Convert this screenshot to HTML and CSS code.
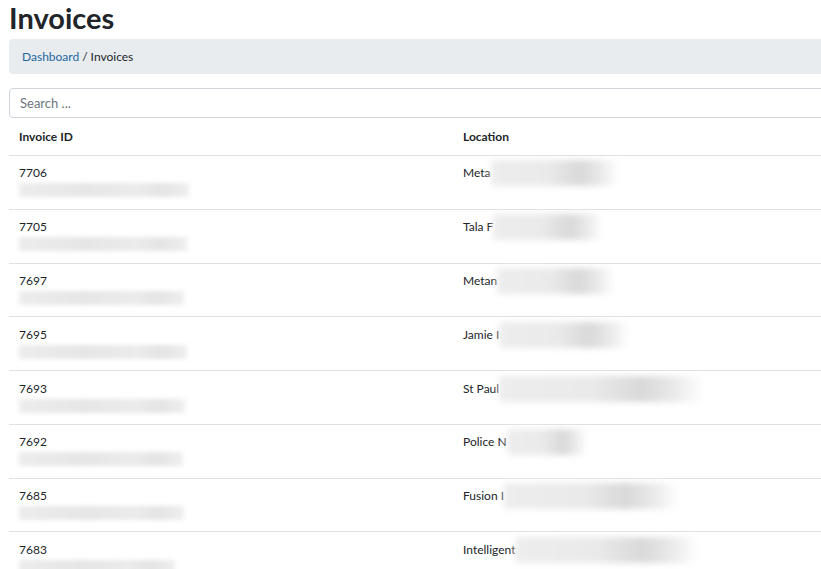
FILE: index.html
```html
<!DOCTYPE html>
<html lang="en">

<head>
  <meta charset="UTF-8">
  <meta name="viewport" content="width=device-width, initial-scale=1.0">
  <title>Invoices</title>
  <link rel="stylesheet" href="styles.css">
</head>

<body>
  <div class="page">
    <h1>Invoices</h1>

    <nav class="breadcrumb">
      <a href="#">Dashboard</a> <span class="sep">/</span> Invoices
    </nav>

    <input class="search" type="text" placeholder="Search ...">

    <!-- invoice list -->
    <table class="invoices">
      <thead>
        <tr>
          <th class="col-id">Invoice ID</th>
          <th>Location</th>
        </tr>
      </thead>
      <tbody>
        <tr>
          <td>7706<br><span class="blur-line" style="width:170px"></span></td>
          <td>Meta<span class="blur-box" style="width:128px"></span></td>
        </tr>
        <tr>
          <td>7705<br><span class="blur-line" style="width:168px"></span></td>
          <td>Tala F<span class="blur-box" style="width:110px"></span></td>
        </tr>
        <tr>
          <td>7697<br><span class="blur-line" style="width:165px"></span></td>
          <td>Metan<span class="blur-box" style="width:118px"></span></td>
        </tr>
        <tr>
          <td>7695<br><span class="blur-line" style="width:168px"></span></td>
          <td>Jamie I<span class="blur-box" style="width:130px"></span></td>
        </tr>
        <tr>
          <td>7693<br><span class="blur-line" style="width:166px"></span></td>
          <td>St Paul<span class="blur-box" style="width:205px"></span></td>
        </tr>
        <tr>
          <td>7692<br><span class="blur-line" style="width:164px"></span></td>
          <td>Police N<span class="blur-box" style="width:80px"></span></td>
        </tr>
        <tr>
          <td>7685<br><span class="blur-line" style="width:165px"></span></td>
          <td>Fusion I<span class="blur-box" style="width:175px"></span></td>
        </tr>
        <tr>
          <td>7683<br><span class="blur-line" style="width:156px"></span></td>
          <td>Intelligent<span class="blur-box" style="width:183px"></span></td>
        </tr>
      </tbody>
    </table>
  </div>
</body>

</html>
```

FILE: styles.css
```css
html {
  overflow: hidden;
}

body {
  margin: 0;
  font-family: Lato, "Noto Sans", Arial, sans-serif;
  font-size: 12px;
  line-height: 18px;
  color: #212529;
  background-color: #fff;
}

.page {
  width: 900px;
  padding-left: 9px;
}

h1 {
  margin: 0 0 4px 0;
  font-size: 29px;
  font-weight: bold;
  line-height: 35px;
  color: #212529;
}

.breadcrumb {
  height: 35px;
  display: flex;
  align-items: center;
  gap: 3px;
  padding: 0 13px;
  background-color: #e9ecef;
  border-radius: 4px;
  margin-bottom: 14px;
}

.breadcrumb a {
  color: #2467a0;
  text-decoration: none;
}

.search {
  display: block;
  box-sizing: border-box;
  width: 100%;
  height: 30px;
  padding: 0 10px;
  font-family: inherit;
  font-size: 13px;
  color: #495057;
  border: 1px solid #ced4da;
  border-radius: 4px;
}

.search::placeholder {
  color: #6c757d;
}

table {
  width: 100%;
  border-collapse: collapse;
}

th,
td {
  padding: 8.4px 10px;
  text-align: left;
  vertical-align: top;
}

th {
  padding: 10px 10px 9px 10px;
  font-weight: bold;
  border-bottom: 1px solid #dee2e6;
}

td {
  border-bottom: 1px solid #dee2e6;
}

.col-id {
  width: 424px;
}

.blur-line {
  display: inline-block;
  height: 14px;
  margin-top: 1px;
  vertical-align: top;
  background: linear-gradient(90deg, #ececec, #e6e6e6 40%, #ebebeb 70%, #e4e4e4 85%, #efefef);
  filter: blur(2px);
}

.blur-box {
  display: inline-block;
  height: 26px;
  margin-top: -4px;
  vertical-align: top;
  background: linear-gradient(90deg, #ededed, #eaeaea 45%, #dedede 62%, #d9d9d9 70%, #e9e9e9 85%, rgba(255, 255, 255, 0));
  filter: blur(3px);
}
```
